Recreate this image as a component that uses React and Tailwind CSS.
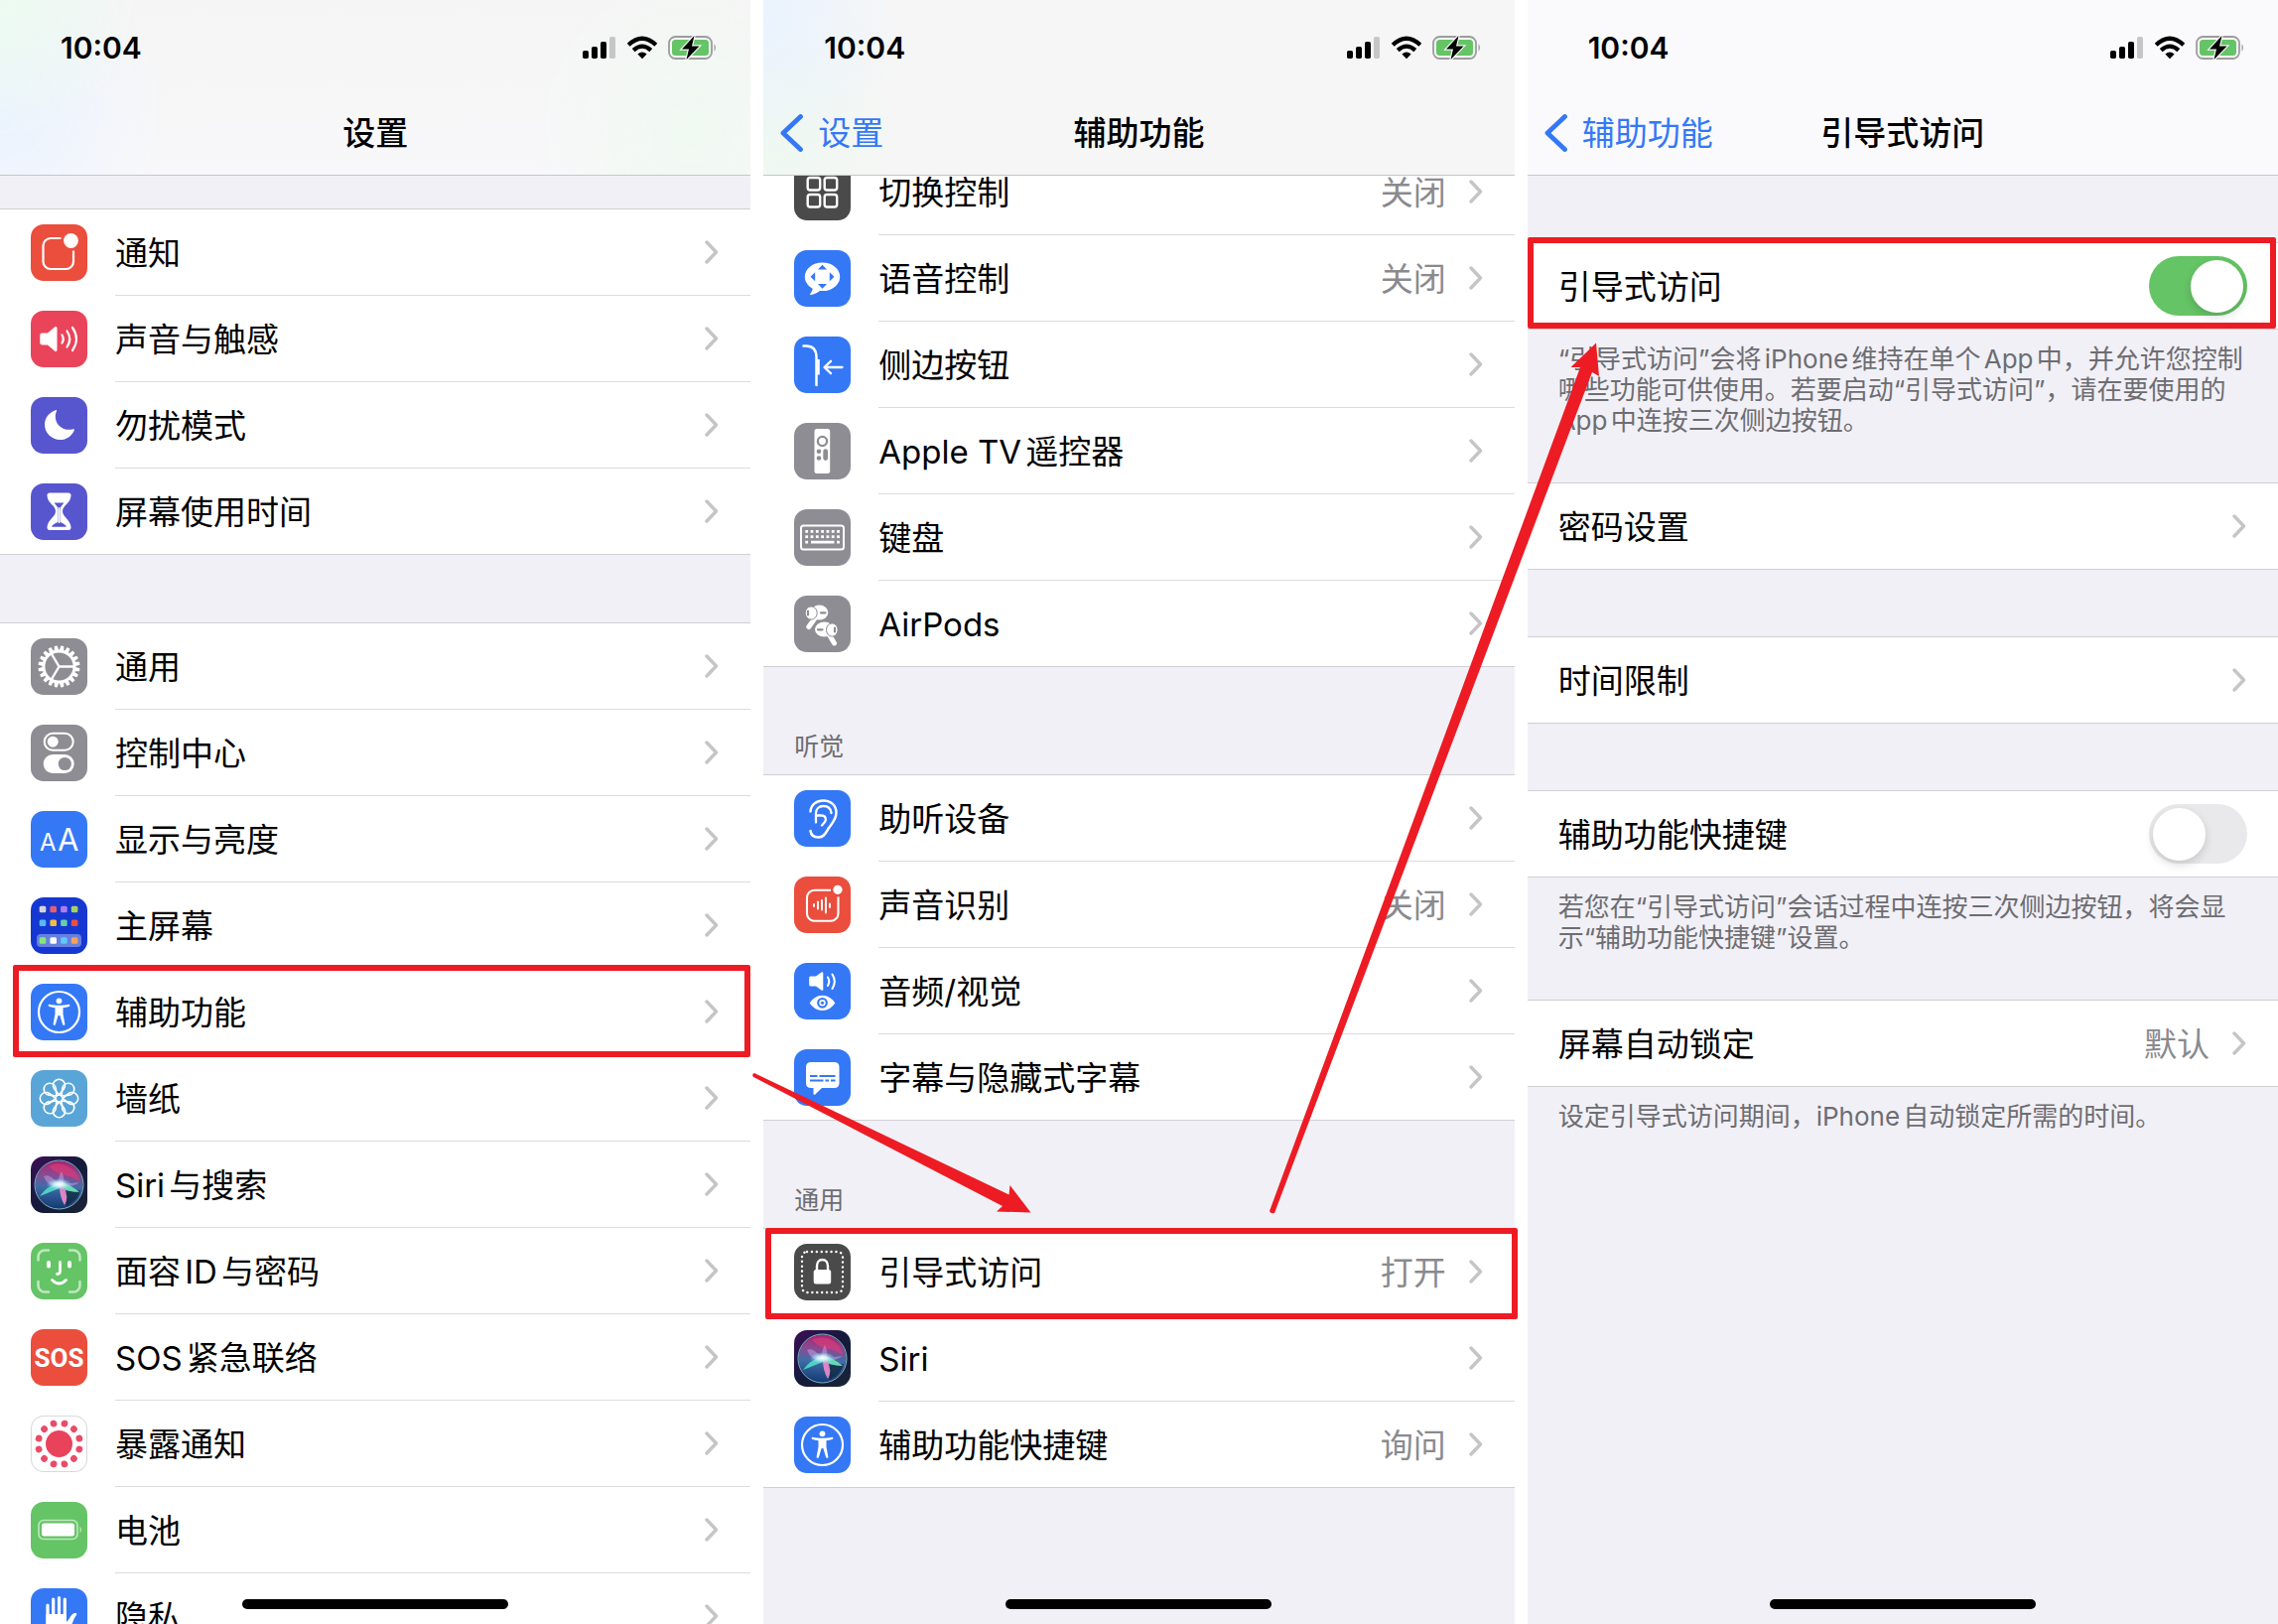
import React from "react";

const BLUE = "#3478f6";
const GRAY = "#8e8d93";
const RED = "#eb4e3d";
const GREEN = "#65c466";
const INDIGO = "#5756ce";

function Tile({ fill, children }) {
  return (
    <svg viewBox="0 0 57 57" className="size-[57px] shrink-0" aria-hidden="true">
      <rect width="57" height="57" rx="13" fill={fill} />
      {children}
    </svg>
  );
}

const line = { fill: "none", stroke: "#fff", strokeLinecap: "round", strokeLinejoin: "round" };

function NotificationIcon() {
  return (
    <Tile fill={RED}>
      <path {...line} strokeWidth="2.2" strokeLinecap="butt" d="M30.5 14H20a7.500 7.500 0 0 0-7.500 7.500v16A7.500 7.500 0 0 0 20 45h15.500a7.500 7.500 0 0 0 7.500-7.500V26.500" />
      <circle cx="40.500" cy="16.500" r="7.400" fill="#fff" />
    </Tile>
  );
}

function SoundIcon() {
  return (
    <Tile fill="#ea445a">
      <path fill="#fff" d="M11.500 22.500H17l7-6c1.200-1 2.500-.5 2.500 1v22c0 1.500-1.300 2-2.500 1l-7-6h-5.500c-1.300 0-2.200-.9-2.200-2.200v-7.600c0-1.300.9-2.200 2.200-2.200z" />
      <path {...line} strokeWidth="2.200" d="M31.500 24.500q2.500 4 0 8M36.500 20.500q5.500 8 0 16M42 17q8 11.500 0 23" />
    </Tile>
  );
}

function MoonIcon() {
  return (
    <Tile fill={INDIGO}>
      <path fill="#fff" d="M25 13.200c.6-.4 1.300.1 1 .8-4.500 10.500 4.500 21.500 16.800 18.300.8-.2 1.300.4 1 1.100C41.500 39 36 43 29.500 43 21 43 14 36.200 14 27.800c0-6.600 4-12 11-14.600z" />
    </Tile>
  );
}

function HourglassIcon() {
  return (
    <Tile fill={INDIGO}>
      <path fill="#fff" d="M19 9.500h19c1.700 0 2.700 1.300 2.500 3-.7 8-8.500 9.500-8.500 15.500s7.800 8 8.500 16c.2 1.700-.8 3-2.500 3H19c-1.700 0-2.700-1.300-2.500-3 .7-8 8.500-10 8.500-16s-7.800-7.500-8.500-15.500c-.2-1.700.8-3 2.500-3z" />
      <path fill={INDIGO} d="M23.500 19.500h10c-1.800 2.300-4 4-4 7.500v11c0 1.800 5.500 2.500 6.300 5.700H21.200c.8-3.200 6.300-3.900 6.300-5.700V27c0-3.500-2.200-5.200-4-7.500z" />
      <path stroke="#fff" strokeWidth="1.600" d="M28.500 24v16" />
    </Tile>
  );
}

function GearIcon() {
  const teeth = Array.from({ length: 20 }, (_, i) => i * 18 + 9);
  return (
    <Tile fill={GRAY}>
      {teeth.map((a) => (
        <path key={a} fill="#fff" d="M27 7.500h3l.8 5.500h-4.600z" transform={`rotate(${a} 28.500 28.500)`} />
      ))}
      <circle cx="28.500" cy="28.500" r="15.500" {...line} strokeWidth="2.800" />
      <path {...line} strokeWidth="2.400" d="M28.500 28.500H44M28.500 28.500l-8-13.500M28.500 28.500l-8 13.500" />
    </Tile>
  );
}

function ControlIcon() {
  return (
    <Tile fill={GRAY}>
      <rect x="13.700" y="8.700" width="29" height="17" rx="8.500" {...line} strokeWidth="2" />
      <circle cx="22.200" cy="17.200" r="5.500" fill="#fff" />
      <rect x="12.700" y="30" width="31" height="19" rx="9.500" fill="#fff" />
      <circle cx="34.300" cy="39.500" r="6.600" fill={GRAY} />
    </Tile>
  );
}

function DisplayIcon() {
  return (
    <Tile fill={BLUE}>
      <text x="9" y="40" fill="#fff" fontSize="24" fontFamily="Inter">A</text>
      <text x="27" y="40" fill="#fff" fontSize="31" fontFamily="Inter">A</text>
    </Tile>
  );
}

function HomeIcon() {
  const xs = [12, 22.7, 33.4, 44.1];
  const rows = [
    [12, ["#d5d5d5", "#e65d6c", "#b07af0", "#a5d25a"]],
    [25.700, ["#5ab8f5", "#f3bd42", "#67cfa5", "#e8503f"]],
    [43.500, ["#83e87c", "#ffffff", "#5fc7fa", "#f3a15c"]],
  ];
  return (
    <Tile fill="#1638d2">
      <rect x="6" y="37" width="45" height="13" rx="4" fill="#6680e0" />
      {rows.map(([y, colors]) =>
        colors.map((c, i) => <rect key={c} x={xs[i] - 3.300} y={y - 3.300} width="6.600" height="6.600" rx="1.500" fill={c} />)
      )}
    </Tile>
  );
}

function AccessIcon() {
  return (
    <Tile fill={BLUE}>
      <circle cx="28.500" cy="28.500" r="20.500" {...line} strokeWidth="2.200" />
      <circle cx="28.500" cy="17.300" r="2.900" fill="#fff" />
      <path fill="#fff" d="M18.800 20.800c3 .6 6 1 9.700 1s6.700-.4 9.700-1c1.300-.2 1.600 1.700.4 2.100-2.100.6-4.200 1-6.100 1.300v6.300l1.900 10c.2 1.500-1.900 1.900-2.300.5L29.400 32h-1.800l-2.700 9c-.4 1.400-2.500 1-2.300-.5l1.900-10v-6.300c-1.900-.3-4-.7-6.100-1.300-1.200-.4-.9-2.300.4-2.100z" />
    </Tile>
  );
}

function FlowerIcon() {
  return (
    <Tile fill="#5aa5d7">
      {[0, 45, 90, 135, 180, 225, 270, 315].map((a) => (
        <path key={a} {...line} strokeWidth="1.700" d="M28.500 25l-4.800-6a6 6 0 1 1 9.600 0z" transform={`rotate(${a} 28.500 28.500)`} />
      ))}
      <circle cx="28.500" cy="28.500" r="3.500" {...line} strokeWidth="1.700" />
    </Tile>
  );
}

function SiriIcon() {
  return (
    <Tile fill="url(#siriBack)">
      <defs>
        <linearGradient id="siriBack" x1="0" y1="0" x2="1" y2="1">
          <stop offset="0" stopColor="#3c0f55" />
          <stop offset=".5" stopColor="#131a3c" />
          <stop offset="1" stopColor="#1b2436" />
        </linearGradient>
        <linearGradient id="siriOrb" x1=".5" y1="0" x2=".45" y2="1">
          <stop offset="0" stopColor="#a8256f" />
          <stop offset=".3" stopColor="#8a4a92" />
          <stop offset=".55" stopColor="#3f6da8" />
          <stop offset="1" stopColor="#143a74" />
        </linearGradient>
        <radialGradient id="siriGlow">
          <stop offset="0" stopColor="#fff" />
          <stop offset=".4" stopColor="#d8f6ff" stopOpacity=".85" />
          <stop offset="1" stopColor="#7fd8f0" stopOpacity="0" />
        </radialGradient>
        <filter id="siriSoft"><feGaussianBlur stdDeviation=".7" /></filter>
      </defs>
      <circle cx="28.500" cy="28.500" r="24" fill="url(#siriOrb)" />
      <g filter="url(#siriSoft)">
        <path fill="#d63a78" opacity=".75" d="M18 10q12-6 24 3 6 5 7 12-9-6-19-7-7-3-12-8z" />
        <path fill="#16263f" opacity=".75" d="M50 34q-2 10-14 16-1-9-5-17 10 4 19 1z" />
        <path fill="#c9a0e6" opacity=".5" d="M13 20q7-3 14 8 1-8 4-13 4 7 1 13l17-2q-8 6-20 5-12 0-16-11z" />
        <path fill="#4fdcc8" opacity=".9" d="M29 26Q16 30 9 40q13-5 22-9z" />
        <path fill="#6ce8b4" opacity=".9" d="M27 26q12 1 22 10-10 0-21-5z" />
        <path fill="#f08ccc" opacity=".9" d="M29 29q0 12 5 20 5-7-1-20z" />
      </g>
      <ellipse cx="28.500" cy="28" rx="13" ry="6" fill="url(#siriGlow)" />
      <circle cx="28.500" cy="28.500" r="24.500" fill="none" stroke="#7fb5c4" strokeWidth="1" />
    </Tile>
  );
}

function FaceIcon() {
  return (
    <Tile fill={GREEN}>
      <path {...line} stroke="#bfe6bf" strokeWidth="2.600" d="M7.500 17.500V14A6.500 6.500 0 0 1 14 7.500h4M39 7.500h4a6.500 6.500 0 0 1 6.500 6.500v3.500M49.500 39v4a6.500 6.500 0 0 1-6.500 6.500h-4M18 49.500h-4A6.500 6.500 0 0 1 7.500 43v-4" />
      <path {...line} strokeWidth="4" d="M18 20v3.500M39 20v3.500" />
      <path {...line} strokeWidth="2.800" d="M29.500 19.500v9q0 3-3 3M21.500 37.500q7 7 14 0" />
    </Tile>
  );
}

function SosIcon() {
  return (
    <Tile fill={RED}>
      <text x="28.500" y="38" textAnchor="middle" fill="#fff" fontSize="26" fontWeight="700" fontFamily="Roboto">SOS</text>
    </Tile>
  );
}

function ExposureIcon() {
  const dots = Array.from({ length: 12 }, (_, i) => i * 30 + 15);
  return (
    <Tile fill="#d9d9dc">
      <rect x="1" y="1" width="55" height="55" rx="12" fill="#fff" />
      <circle cx="28.500" cy="28.500" r="13.500" fill="#e9435c" />
      {dots.map((a) => (
        <circle key={a} cx="28.500" cy="7.400" r="3.400" fill="#e94c68" transform={`rotate(${a} 28.500 28.500)`} />
      ))}
    </Tile>
  );
}

function BatteryIcon() {
  return (
    <Tile fill={GREEN}>
      <rect x="8" y="18.500" width="39" height="19" rx="5" fill="none" stroke="#bfe6bf" strokeWidth="1.600" />
      <rect x="11" y="21.500" width="33" height="13" rx="2.500" fill="#fff" />
      <path fill="#bfe6bf" d="M49.500 24.500q3 3.500 0 7z" />
    </Tile>
  );
}

function HandIcon() {
  return (
    <Tile fill={BLUE}>
      <path {...line} strokeWidth="3.200" d="M17 17v18M22.700 11v22M28.500 9.500v22M34.300 11v22" />
      <path fill="#fff" d="M15.400 26h20.500v8c3-2 4-7 7-8.500 2-1 4.500-.5 3 1.500-3 4-4 10-8 16-3 5-7 6-11 6-8 0-11.500-5-11.500-13z" />
    </Tile>
  );
}

function SwitchControlIcon() {
  return (
    <Tile fill="#4a4a4a">
      <g {...line} strokeWidth="2.400">
        <rect x="13.700" y="14" width="12.500" height="12.500" rx="2.500" />
        <rect x="30.700" y="14" width="12.500" height="12.500" rx="2.500" />
        <rect x="13.700" y="31" width="12.500" height="12.500" rx="2.500" />
        <rect x="30.700" y="31" width="12.500" height="12.500" rx="2.500" />
      </g>
    </Tile>
  );
}

function VoiceIcon() {
  return (
    <Tile fill={BLUE}>
      <ellipse cx="28.500" cy="26.800" rx="17.700" ry="14.300" fill="#fff" />
      <path fill="#fff" d="M19 36q0 5-2.500 7.500c-1 1.200 0 2 1.200 1.600Q24 43.500 28 39z" />
      <path fill={BLUE} d="M28.500 14.800l4.500 4.700h-9zM28.500 38.800l4.500-4.700h-9zM16.500 26.800l4.700-4.500v9zM40.500 26.800l-4.700-4.500v9z" />
    </Tile>
  );
}

function SideButtonIcon() {
  return (
    <Tile fill={BLUE}>
      <path {...line} strokeWidth="2.500" d="M9.500 9.500h2.500q10.500 0 10.500 11.500v28" />
      <path {...line} strokeWidth="2.600" strokeLinecap="butt" d="M24.500 23v15.500" />
      <path {...line} strokeWidth="2.300" d="M48.500 31H31M37 24.800L30.500 31l6.500 6.200" />
    </Tile>
  );
}

function RemoteIcon() {
  return (
    <Tile fill={GRAY}>
      <rect x="20.500" y="6" width="15.700" height="45" rx="2.500" fill="#fff" />
      <circle cx="28.500" cy="18.500" r="4.600" fill="none" stroke={GRAY} strokeWidth="2.300" />
      <circle cx="25" cy="28.700" r="2.300" fill={GRAY} />
      <circle cx="25" cy="35.500" r="2.300" fill={GRAY} />
      <rect x="29.300" y="26.300" width="4.800" height="11.700" rx="2.400" fill={GRAY} />
    </Tile>
  );
}

function KeyboardIcon() {
  const keys = [0, 1, 2, 3, 4, 5, 6];
  return (
    <Tile fill={GRAY}>
      <rect x="7" y="16.500" width="43" height="24" rx="2.500" {...line} strokeWidth="2" />
      {keys.map((k) => (
        <React.Fragment key={k}>
          <rect x={11.300 + k * 5.300} y="21" width="2.800" height="2.800" fill="#fff" />
          <rect x={11.300 + k * 5.300} y="26.300" width="2.800" height="2.800" fill="#fff" />
        </React.Fragment>
      ))}
      <path fill="#fff" d="M11.300 31.700h2.800v2.800h-2.800zM17 31.700h23.500v2.800H17zM43.100 31.700h2.800v2.800h-2.800z" />
    </Tile>
  );
}

function AirPodsIcon() {
  return (
    <Tile fill={GRAY}>
      <path {...line} strokeWidth="5" d="M20.500 23.500L14.800 31.500M35.500 39.500l5 8.500" />
      <ellipse cx="25.500" cy="17" rx="8.800" ry="7.500" fill="#fff" />
      <ellipse cx="17.200" cy="17.500" rx="6" ry="6.600" fill="#fff" stroke={GRAY} strokeWidth="1" />
      <ellipse cx="30.500" cy="34" rx="9.500" ry="7.500" fill="#fff" />
      <ellipse cx="38.300" cy="34.500" rx="5.800" ry="6.600" fill="#fff" stroke={GRAY} strokeWidth="1" />
      <path stroke={GRAY} strokeWidth="2.200" strokeLinecap="round" d="M27 17.300h4.500M24 34.300h4.500M14 15.500v4M41 32.500v4" />
    </Tile>
  );
}

function EarIcon() {
  return (
    <Tile fill={BLUE}>
      <path {...line} strokeWidth="2.500" d="M16.500 21.500C17 14.500 22.500 10.500 29.500 10.500c7.500 0 13 5 13 12 0 7-4 10.500-7.500 15.500-2.500 3.500-4 9.500-10.500 9.500-4.500 0-7.500-2.500-8-6.500" />
      <path {...line} strokeWidth="2.300" d="M22 32.500V23.500c0-4.500 3-7.500 7.500-7.500s7.500 2.500 8 7M22.500 25.500h5c4 0 5.500 3.500 3.500 6.500l-3 3.500" />
    </Tile>
  );
}

function SoundRecognitionIcon() {
  return (
    <Tile fill={RED}>
      <path {...line} strokeWidth="2.100" strokeLinecap="butt" d="M37 13.700H20.500a7.500 7.500 0 0 0-7.500 7.500v16a7.500 7.500 0 0 0 7.500 7.500h16.500a7.500 7.500 0 0 0 7.500-7.500V20.500" />
      <circle cx="44" cy="13.300" r="4.600" fill="#fff" />
      <path {...line} strokeWidth="1.900" d="M20 28v2M24 25.500v7M28 24v9.500M32 21.500v15M36 27.500v3.500" />
    </Tile>
  );
}

function AudioVisualIcon() {
  return (
    <Tile fill={BLUE}>
      <path fill="#fff" d="M17 13.500h5l5.500-4c1-.7 1.800-.3 1.800.8v16.400c0 1.100-.8 1.500-1.800.8l-5.500-4h-5c-1.200 0-1.800-.6-1.800-1.800v-6.400c0-1.200.6-1.800 1.800-1.800z" />
      <path {...line} strokeWidth="2.100" d="M34 14.500q2.500 4 0 8.500M38.500 11.500q4.500 7 0 14.500" />
      <path fill="#fff" d="M15.700 40.500c3-4.500 7.500-7.700 12.800-7.700s9.800 3.200 12.800 7.700c-3 4.500-7.500 7.500-12.800 7.500s-9.800-3-12.800-7.500z" />
      <circle cx="28.500" cy="40.300" r="4.300" fill="#fff" stroke={BLUE} strokeWidth="2.200" />
      <circle cx="28.500" cy="40.300" r="1.600" fill={BLUE} />
    </Tile>
  );
}

function CaptionIcon() {
  return (
    <Tile fill={BLUE}>
      <path fill="#fff" d="M17 13h23.500c3.200 0 5 1.800 5 5v16c0 3.200-1.800 5-5 5H28l-6.500 6.200c-1 1-2 .5-2-.8V39H17c-3.200 0-5-1.800-5-5V18c0-3.200 1.800-5 5-5z" />
      <path stroke={BLUE} strokeWidth="1.800" d="M16 27h7.500M25.500 27H41.500M16 31.500h13.500M31.500 31.500h3.500M37 31.500h4.500" />
    </Tile>
  );
}

function GuidedIcon() {
  return (
    <Tile fill="#4a4a4a">
      <rect x="8" y="8" width="41" height="41" rx="5" fill="none" stroke="#fff" strokeWidth="2.400" strokeLinecap="round" strokeDasharray="0.100 4.800" />
      <rect x="19.700" y="26" width="17.500" height="14.500" rx="2.500" fill="#fff" />
      <path {...line} strokeWidth="2.400" d="M23 27v-4.500c0-4 2.200-6.500 5.500-6.500s5.500 2.500 5.500 6.500V27" />
    </Tile>
  );
}

function Chevron() {
  return (
    <svg viewBox="0 0 14 24" className="h-6 w-3.5 shrink-0" aria-hidden="true">
      <path d="M2 2l9.500 10L2 22" fill="none" stroke="#c5c5c7" strokeWidth="3.400" strokeLinecap="round" strokeLinejoin="round" />
    </svg>
  );
}

function StatusBar() {
  return (
    <div className="flex h-24 items-center justify-between pr-[33px] pl-[61px]">
      <time className="text-[30px] leading-9 font-semibold">10:04</time>
      <div className="flex items-center gap-2.5">
        <svg viewBox="0 0 34 24" className="h-6 w-[34px]" aria-hidden="true">
          <rect x="0" y="15" width="6" height="8" rx="1.800" />
          <rect x="9" y="11" width="6" height="12" rx="1.800" />
          <rect x="18" y="6" width="6" height="17" rx="1.800" />
          <rect x="27" y="1" width="6" height="22" rx="1.800" fill="#c6c6c6" />
        </svg>
        <svg viewBox="0 0 32 24" className="h-6 w-8" aria-hidden="true">
          <path d="M2.200 9.200q13.800-13 27.600 0M7.200 14.600q8.800-8 17.600 0" fill="none" stroke="#000" strokeWidth="4.200" />
          <path d="M16 23.200l-4.600-4.700q4.600-3.800 9.200 0z" />
        </svg>
        <svg viewBox="0 0 50 24" className="h-6 w-[50px]" aria-hidden="true">
          <rect x="1" y="1" width="43" height="22" rx="6.500" fill="none" stroke="#9d9d9f" strokeWidth="1.800" />
          <rect x="4" y="4" width="37" height="16" rx="3.500" fill="#65c466" />
          <path d="M46.500 8q3 4 0 8z" fill="#9d9d9f" />
          <path d="M26.500 0L14 13.500h7L18.500 24 31.500 10.500h-7.500z" stroke="#f6f6f6" strokeWidth="2.400" paintOrder="stroke" />
        </svg>
      </div>
    </div>
  );
}

function Header({ title, back, tint }) {
  return (
    <header className={`relative z-10 h-[177px] shrink-0 border-b border-[#c6c6ca] ${tint}`}>
      <StatusBar />
      <div className="grid h-[76px] grid-cols-[1fr_auto_1fr] items-center">
        <div>
          {back && (
            <button type="button" className="flex items-center gap-[15px] pl-[17px] text-[33px] leading-10 text-[#3478f6]">
              <svg viewBox="0 0 23 38" className="h-[38px] w-[23px]" aria-hidden="true">
                <path d="M20.500 2.500L3 19l17.500 16.500" fill="none" stroke="#3478f6" strokeWidth="4.800" strokeLinecap="round" strokeLinejoin="round" />
              </svg>
              {back}
            </button>
          )}
        </div>
        <h1 className="text-[33px] leading-10 font-medium">{title}</h1>
        <div />
      </div>
    </header>
  );
}

function Row({ icon: Icon, label, value, marked, clipped, last }) {
  return (
    <li className={`relative flex shrink-0 ${clipped ? "-mt-[27px]" : ""}`}>
      <button type="button" className={`flex h-[87px] w-full items-center text-left ${last ? "border-b border-[#d0d0d4]" : ""} pl-[31px]`}>
        {Icon && <span className="mr-7"><Icon /></span>}
        <span className={`flex h-full min-w-0 grow items-center pr-8 ${last ? "" : "border-b border-[#dcdcde]"}`}>
          <span className="grow pt-0.5 text-[33px] leading-10">{label}</span>
          {value && <span className="mr-[23px] pt-0.5 text-[33px] leading-10 text-[#8a8a8e]">{value}</span>}
          <Chevron />
        </span>
      </button>
      {marked}
    </li>
  );
}

function Group({ rows, open }) {
  return (
    <ul className={`bg-white ${open ? "" : "border-t border-[#d0d0d4]"}`}>
      {rows.map((row, i) => (
        <Row key={row.label} {...row} last={i === rows.length - 1} />
      ))}
    </ul>
  );
}

function SectionLabel({ children }) {
  return <h2 className="flex h-[108px] items-end px-[31px] pb-3 text-[25px] leading-[31px] text-[#6d6d72]">{children}</h2>;
}

function Note({ children }) {
  return <p className="px-[31px] pt-[14px] pb-[47px] text-[26px] leading-[31px] text-[#6d6d72]">{children}</p>;
}

function ToggleRow({ id, label, checked, marked }) {
  return (
    <div className="relative flex h-[88px] items-center justify-between border-y border-[#d0d0d4] bg-white px-[31px]">
      <label htmlFor={id} className="pt-0.5 text-[33px] leading-10">{label}</label>
      <input
        id={id}
        type="checkbox"
        role="switch"
        defaultChecked={checked}
        className="flex h-[60px] w-[99px] appearance-none items-center rounded-full bg-[#e9e9eb] px-1 before:size-[53px] before:rounded-full before:bg-white before:shadow-[0_4px_10px_rgba(0,0,0,0.15)] checked:justify-end checked:bg-[#65c466]"
      />
      {marked}
    </div>
  );
}

function Phone({ children }) {
  return <section className="relative flex h-full min-w-0 flex-col bg-[#f1f0f6]">{children}</section>;
}

function HomeBar() {
  return <div className="absolute bottom-[15px] left-1/2 h-2.5 w-[268px] -translate-x-1/2 rounded-full bg-black" />;
}

function Mark({ className }) {
  return <span className={`pointer-events-none absolute z-20 rounded-xs border-6 border-[#ed1c24] ${className}`} />;
}

const alerts = [
  { icon: NotificationIcon, label: "通知" },
  { icon: SoundIcon, label: "声音与触感" },
  { icon: MoonIcon, label: "勿扰模式" },
  { icon: HourglassIcon, label: "屏幕使用时间" },
];

const system = [
  { icon: GearIcon, label: "通用" },
  { icon: ControlIcon, label: "控制中心" },
  { icon: DisplayIcon, label: "显示与亮度" },
  { icon: HomeIcon, label: "主屏幕" },
  { icon: AccessIcon, label: "辅助功能", marked: <Mark className="-top-1 -bottom-0.5 left-[13px] right-0" /> },
  { icon: FlowerIcon, label: "墙纸" },
  { icon: SiriIcon, label: "Siri与搜索" },
  { icon: FaceIcon, label: "面容ID与密码" },
  { icon: SosIcon, label: "SOS紧急联络" },
  { icon: ExposureIcon, label: "暴露通知" },
  { icon: BatteryIcon, label: "电池" },
  { icon: HandIcon, label: "隐私" },
];

const physical = [
  { icon: SwitchControlIcon, label: "切换控制", value: "关闭", clipped: true },
  { icon: VoiceIcon, label: "语音控制", value: "关闭" },
  { icon: SideButtonIcon, label: "侧边按钮" },
  { icon: RemoteIcon, label: "Apple TV遥控器" },
  { icon: KeyboardIcon, label: "键盘" },
  { icon: AirPodsIcon, label: "AirPods" },
];

const hearing = [
  { icon: EarIcon, label: "助听设备" },
  { icon: SoundRecognitionIcon, label: "声音识别", value: "关闭" },
  { icon: AudioVisualIcon, label: "音频/视觉" },
  { icon: CaptionIcon, label: "字幕与隐藏式字幕" },
];

const general = [
  { icon: GuidedIcon, label: "引导式访问", value: "打开", marked: <Mark className="-top-px -bottom-1 left-0.5 -right-[3px]" /> },
  { icon: SiriIcon, label: "Siri" },
  { icon: AccessIcon, label: "辅助功能快捷键", value: "询问" },
];

export default function App() {
  return (
    <main
      lang="zh-CN"
      className="relative grid h-screen grid-cols-3 grid-rows-[minmax(0,1fr)] gap-[13px] overflow-hidden bg-white font-['Inter','Noto_Sans_CJK_SC',sans-serif] text-black [text-autospace:normal]"
    >
      <Phone>
        <Header
          title="设置"
          tint="bg-[radial-gradient(circle_at_0%_0%,#ecfbf0,transparent_18%),radial-gradient(circle_at_0%_65%,#ebf3ff,transparent_22%),radial-gradient(circle_at_92%_75%,#f0f9f1,transparent_22%),linear-gradient(#f5f5f5,#f8f8fa)]"
        />
        <div className="flex flex-col gap-[68px] pt-[33px]">
          <Group rows={alerts} />
          <Group rows={system} />
        </div>
        <HomeBar />
      </Phone>

      <Phone>
        <Header
          title="辅助功能"
          back="设置"
          tint="bg-[radial-gradient(circle_at_0%_10%,#eaf3ff,transparent_18%),radial-gradient(circle_at_0%_75%,#eef8f0,transparent_20%),linear-gradient(#f6f6f6,#f6f6f6)]"
        />
        <Group rows={physical} open />
        <SectionLabel>听觉</SectionLabel>
        <Group rows={hearing} />
        <SectionLabel>通用</SectionLabel>
        <Group rows={general} />
        <HomeBar />
      </Phone>

      <Phone>
        <Header title="引导式访问" back="辅助功能" tint="bg-[#fafafc]" />
        <div className="flex flex-col pt-[67px]">
          <ToggleRow id="guided" label="引导式访问" checked marked={<Mark className="-top-1.5 bottom-0 left-0 right-0.5" />} />
          <Note>“引导式访问”会将iPhone维持在单个App中，并允许您控制哪些功能可供使用。若要启动“引导式访问”，请在要使用的App中连按三次侧边按钮。</Note>
          <div className="flex flex-col gap-[67px]">
            <Group rows={[{ label: "密码设置" }]} />
            <Group rows={[{ label: "时间限制" }]} />
            <ToggleRow id="shortcut" label="辅助功能快捷键" />
          </div>
          <Note>若您在“引导式访问”会话过程中连按三次侧边按钮，将会显示“辅助功能快捷键”设置。</Note>
          <Group rows={[{ label: "屏幕自动锁定", value: "默认" }]} />
          <Note>设定引导式访问期间，iPhone自动锁定所需的时间。</Note>
        </div>
        <HomeBar />
      </Phone>

      <svg viewBox="0 0 2295 1636" preserveAspectRatio="none" className="pointer-events-none absolute inset-0 z-30 size-full" aria-hidden="true">
        <g fill="#ed1c24">
          <path d="M760 1081L1016.500 1203.500L1017.500 1194L1038.500 1221.500L1004 1220.500L1010 1215L759 1085Q757 1082 760 1081Z" />
          <path d="M1279 1220L1592 370L1582.500 370L1608 345.500L1611 379L1604 375L1284 1222Q1280 1223 1279 1220Z" />
        </g>
      </svg>
    </main>
  );
}
